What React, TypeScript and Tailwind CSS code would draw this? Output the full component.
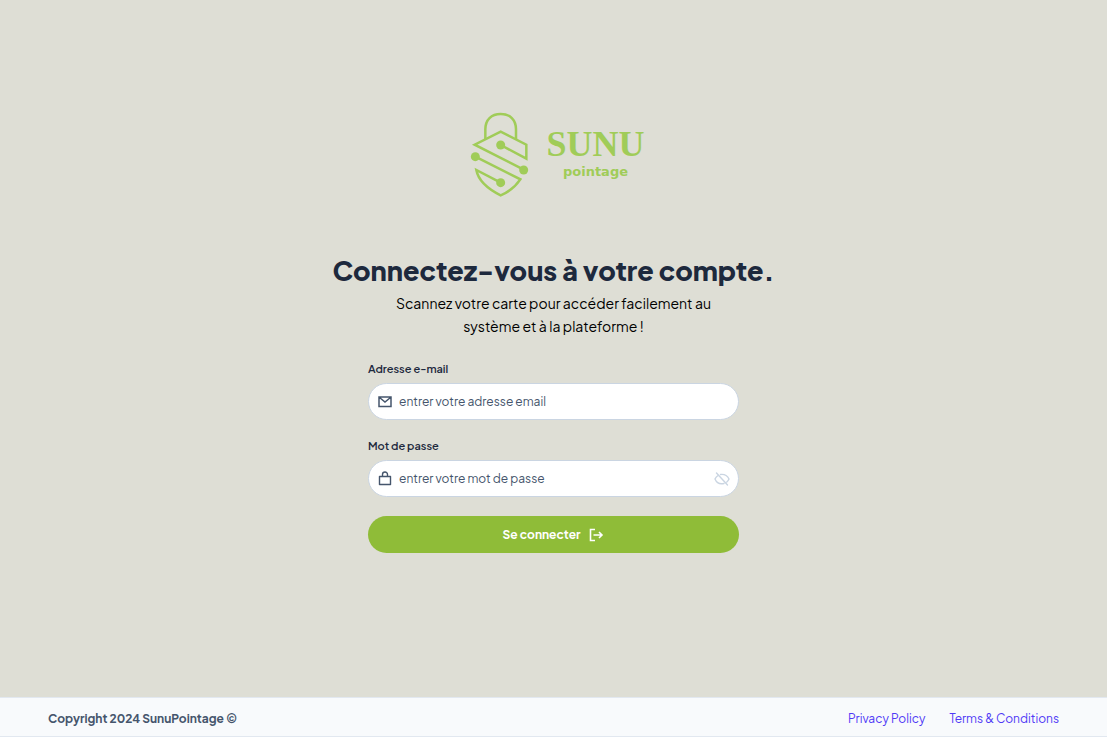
import React from 'react';

function LogoMark() {
  return (
    <svg className="h-[100px] w-20 shrink-0" viewBox="0 0 240 300" fill="none" stroke="#a0cc58" strokeWidth="7.5" aria-hidden="true">
      <path d="M70 105V76C70 47 88 30 116 30s46 17 46 46v29" />
      <path d="M185 197 38 122 116 83 193 122V164L116 123" />
      <path d="M40 158 175 226C160 248 141 264 116 274C76 254 49 230 43 198L116 236" />
      <g fill="#a0cc58" stroke="none">
        <circle cx="116" cy="123" r="13.5" />
        <circle cx="40" cy="158" r="13.5" />
        <circle cx="185" cy="198" r="13.5" />
        <circle cx="116" cy="236" r="13.5" />
      </g>
    </svg>
  );
}

function MailIcon() {
  return (
    <svg className="h-4 w-4 shrink-0" viewBox="0 0 16 16" fill="none" stroke="currentColor" strokeWidth="1.5" aria-hidden="true">
      <path d="M2 3h12v9.5H2zM2.5 3.5 8 8l5.500-4.500" />
    </svg>
  );
}

function LockIcon() {
  return (
    <svg className="h-4 w-4 shrink-0" viewBox="0 0 16 16" fill="none" stroke="currentColor" strokeWidth="1.4" strokeLinejoin="round" aria-hidden="true">
      <path d="M2.500 5.500h11v8h-11zM5.500 5.500V3.500a2.500 2.500 0 0 1 5 0v2" />
    </svg>
  );
}

function EyeOffIcon() {
  return (
    <svg className="h-4 w-4" viewBox="0 0 16 16" fill="none" stroke="currentColor" strokeWidth="1.4" strokeLinecap="round" aria-hidden="true">
      <path d="M6.500 3.500C10.500 3 13.500 5 15 8c-.5 1.200-1.200 2.200-2.200 3M4 4.500C2.700 5.300 1.600 6.500 1 8c1.500 3.500 5 5.500 9 4.500M2.500 2l11 12" />
    </svg>
  );
}

function SignInIcon() {
  return (
    <svg className="h-4 w-4" viewBox="0 0 16 16" fill="none" stroke="currentColor" strokeWidth="1.6" aria-hidden="true">
      <path d="M7 2.500H2.500v11H7M5.500 8H14M11 5l3 3-3 3" />
    </svg>
  );
}

type FieldProps = {
  id: string;
  label: string;
  type: string;
  placeholder: string;
  icon: React.ReactNode;
  action?: React.ReactNode;
};

function Field({ id, label, type, placeholder, icon, action }: FieldProps) {
  return (
    <div className="flex flex-col gap-1">
      <label htmlFor={id} className="text-[11px] leading-5 font-semibold text-slate-800">
        {label}
      </label>
      <div className="flex h-[37px] items-center gap-1.5 rounded-full border border-slate-300 bg-white px-2 text-slate-600">
        {icon}
        <input
          id={id}
          type={type}
          placeholder={placeholder}
          className="min-w-0 flex-1 bg-transparent text-xs leading-5 outline-none placeholder:text-slate-600"
        />
        {action}
      </div>
    </div>
  );
}

export default function App() {
  return (
    <div className="flex min-h-screen flex-col bg-[#deded5] font-['Plus_Jakarta_Sans',Inter,sans-serif]">
      <main className="flex flex-1 flex-col items-center justify-center px-4 pb-10">
        <div className="flex items-center gap-1">
          <LogoMark />
          <div className="flex flex-col items-center text-[#a0cc58]">
            <span className="font-['Liberation_Serif',serif] text-4xl leading-9 font-bold">SUNU</span>
            <span className="font-['DejaVu_Sans',sans-serif] text-[13px] leading-5 font-bold">pointage</span>
          </div>
        </div>

        <h1 className="mt-12 text-center text-[27px] leading-9 font-extrabold text-slate-800">Connectez-vous à votre compte.</h1>
        <p className="mt-1 max-w-[371px] text-center text-sm leading-[23px] text-black">
          Scannez votre carte pour accéder facilement au
          <br />
          système et à la plateforme !
        </p>

        <form className="mt-[21px] flex w-full max-w-[371px] flex-col gap-4" onSubmit={(e) => e.preventDefault()}>
          <Field id="email" label="Adresse e-mail" type="email" placeholder="entrer votre adresse email" icon={<MailIcon />} />
          <Field
            id="password"
            label="Mot de passe"
            type="password"
            placeholder="entrer votre mot de passe"
            icon={<LockIcon />}
            action={
              <button type="button" aria-label="Afficher le mot de passe" className="text-slate-300">
                <EyeOffIcon />
              </button>
            }
          />
          <button
            type="submit"
            className="mt-[3px] flex h-[37px] items-center justify-center gap-2 rounded-full bg-[#8fbc38] text-xs leading-5 font-bold text-white"
          >
            Se connecter
            <SignInIcon />
          </button>
        </form>
      </main>

      <footer className="flex h-10 items-center justify-between border-y border-slate-200 bg-slate-50 px-12 pt-1 text-xs">
        <p className="font-bold text-slate-600">Copyright 2024 SunuPointage ©</p>
        <nav className="flex gap-6 text-indigo-600">
          <a href="#privacy">Privacy Policy</a>
          <a href="#terms">Terms &amp; Conditions</a>
        </nav>
      </footer>
    </div>
  );
}
